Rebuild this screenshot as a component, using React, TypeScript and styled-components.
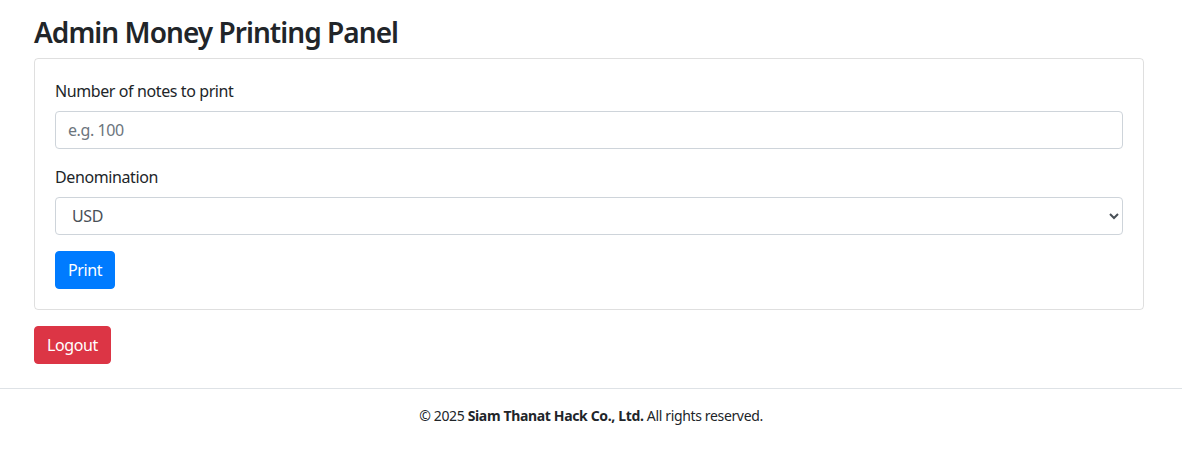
import styled, { createGlobalStyle } from "styled-components";

const GlobalStyle = createGlobalStyle`
  * { box-sizing: border-box; }
  body {
    margin: 0;
    font-family: "Noto Sans", "Liberation Sans", sans-serif;
    font-size: 16px;
    line-height: 1.5;
    letter-spacing: -0.4px;
    color: #212529;
    background: #fff;
  }
`;

const Page = styled.div`
  display: flex;
  flex-direction: column;
`;

const Container = styled.main`
  width: 1110px;
  margin-left: 34px;
  padding-top: 16px;
`;

const Title = styled.h3`
  margin: 0 0 8px;
  font-size: 28px;
  font-weight: 600;
  line-height: 1.2;
  letter-spacing: -0.95px;
`;

const Card = styled.div`
  border: 1px solid rgba(0, 0, 0, 0.125);
  border-radius: 4px;
  padding: 20px;
`;

const FormGroup = styled.div`
  margin-bottom: 16px;
  display: flex;
  flex-direction: column;
`;

const Label = styled.label`
  margin-bottom: 8px;
`;

const inputBase = `
  display: block;
  width: 100%;
  height: 38px;
  padding: 6px 12px;
  font-family: inherit;
  font-size: 16px;
  line-height: 1.5;
  letter-spacing: inherit;
  color: #495057;
  background: #fff;
  border: 1px solid #ced4da;
  border-radius: 4px;
  outline: none;
`;

const Input = styled.input`
  ${inputBase}
  &::placeholder { color: #6c757d; }
`;

const Select = styled.select`
  ${inputBase}
`;

const Button = styled.button<{ $variant: "primary" | "danger" }>`
  height: 38px;
  padding: 6px 12px;
  font-family: inherit;
  font-size: 16px;
  line-height: 1.5;
  letter-spacing: inherit;
  color: #fff;
  border: 1px solid ${(p) => (p.$variant === "primary" ? "#007bff" : "#dc3545")};
  background: ${(p) => (p.$variant === "primary" ? "#007bff" : "#dc3545")};
  border-radius: 4px;
  cursor: pointer;
`;

const Actions = styled.div`
  margin-top: 16px;
`;

const Footer = styled.footer`
  margin-top: 24px;
  border-top: 1px solid #dee2e6;
  padding: 16px 0;
  text-align: center;
  font-size: 14px;
  letter-spacing: -0.35px;
`;

export default function App() {
  return (
    <Page>
      <GlobalStyle />
      <Container>
        <Title>Admin Money Printing Panel</Title>
        <Card>
          <form onSubmit={(e) => e.preventDefault()}>
            <FormGroup>
              <Label htmlFor="notes">Number of notes to print</Label>
              <Input id="notes" type="number" placeholder="e.g. 100" />
            </FormGroup>
            <FormGroup>
              <Label htmlFor="denom">Denomination</Label>
              <Select id="denom" defaultValue="USD">
                <option>USD</option>
                <option>EUR</option>
                <option>THB</option>
              </Select>
            </FormGroup>
            <Button type="submit" $variant="primary">Print</Button>
          </form>
        </Card>
        <Actions>
          <Button $variant="danger">Logout</Button>
        </Actions>
      </Container>
      <Footer>
        © 2025 <strong>Siam Thanat Hack Co., Ltd.</strong> All rights reserved.
      </Footer>
    </Page>
  );
}
